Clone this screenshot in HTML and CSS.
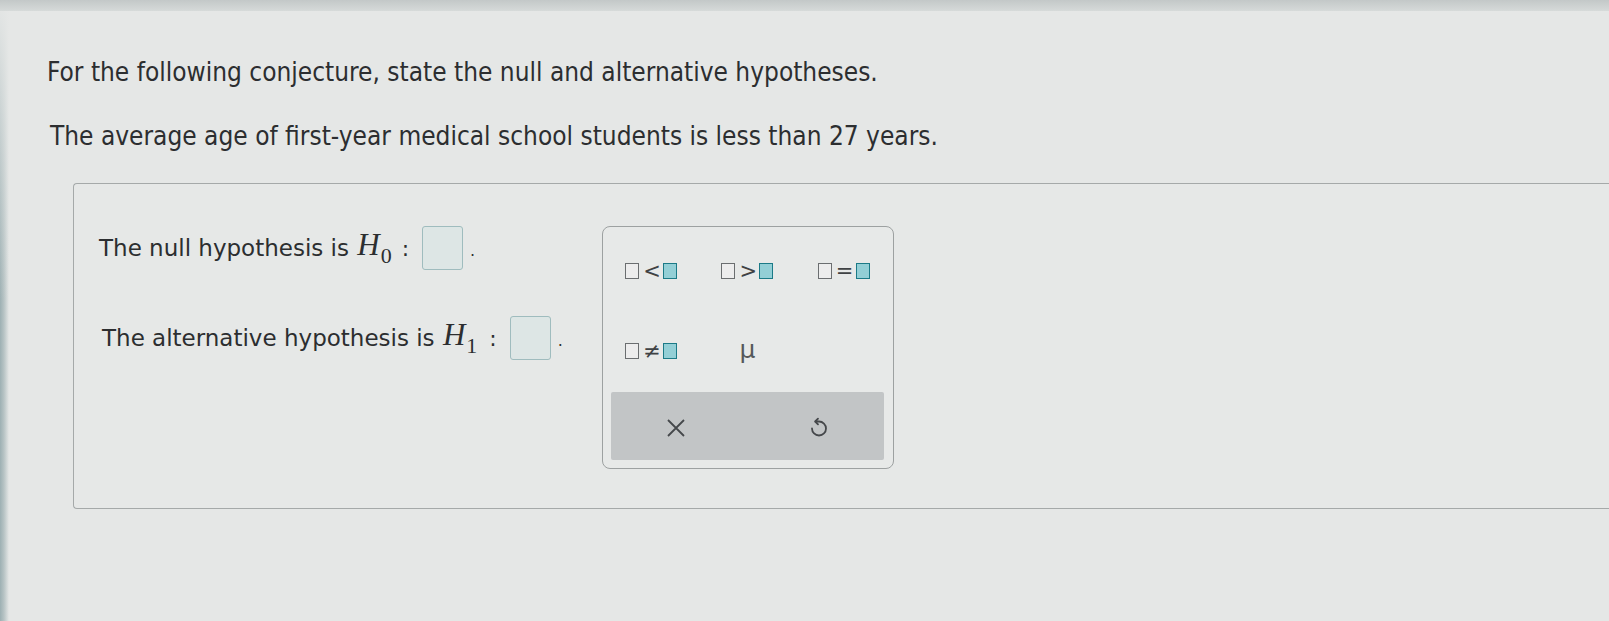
FILE: index.html
```html
<!DOCTYPE html>
<html lang="en">
<head>
<meta charset="utf-8">
<title>Hypotheses</title>
<link rel="stylesheet" href="styles.css">
</head>
<body>
<div class="topstrip"></div>
<main class="page">
  <p class="q q1">For the following conjecture, state the null and alternative hypotheses.</p>
  <p class="q q2">The average age of first-year medical school students is less than 27 years.</p>
  <section class="answer">
    <div class="prompts">
      <div class="prompt p0">The null hypothesis is <span class="math">H<sub>0</sub></span><span class="colon">:</span><span class="input"></span><span class="dot">.</span></div>
      <div class="prompt p1">The alternative hypothesis is <span class="math">H<sub>1</sub></span><span class="colon">:</span><span class="input"></span><span class="dot">.</span></div>
    </div>
    <div class="palette">
      <div class="keys">
        <button class="key"><span class="sq"></span><span class="rel">&lt;</span><span class="sq fill"></span></button>
        <button class="key"><span class="sq"></span><span class="rel">&gt;</span><span class="sq fill"></span></button>
        <button class="key"><span class="sq"></span><span class="rel">=</span><span class="sq fill"></span></button>
        <button class="key"><span class="sq"></span><span class="rel">&ne;</span><span class="sq fill"></span></button>
        <button class="key mu">&mu;</button>
      </div>
      <div class="bar">
        <button class="act act-x">
          <svg width="22" height="22" viewBox="0 0 22 22"><path d="M3 3 L19 19 M19 3 L3 19" stroke="#45484b" stroke-width="1.8" fill="none"/></svg>
        </button>
        <button class="act act-undo">
          <svg width="22" height="24" viewBox="0 0 22 24"><path d="M7.5 5.5 H11 A7 7 0 1 1 4 12.5" stroke="#45484b" stroke-width="1.8" fill="none" stroke-linecap="round"/><path d="M10 2.6 L7.2 5.5 L10 8.4" stroke="#45484b" stroke-width="1.8" fill="none" stroke-linecap="round" stroke-linejoin="round"/></svg>
        </button>
      </div>
    </div>
  </section>
</main>
</body>
</html>
```
FILE: styles.css
```css
html, body {
  margin: 0;
  padding: 0;
}
body {
  width: 1609px;
  height: 621px;
  overflow: hidden;
  background:
    linear-gradient(to bottom, rgba(229,231,230,1) 0, rgba(229,231,230,0) 300px),
    linear-gradient(to right, #9db0b3 0, #b8c4c5 4px, rgba(229,231,230,0) 9px),
    #e5e7e6;
  font-family: "DejaVu Sans", sans-serif;
  color: #2f3133;
}
.topstrip {
  height: 11px;
  background: linear-gradient(to bottom, #c3c8c8, #d6dad9);
}
.page {
  padding-left: 47px;
}
.q {
  margin: 0;
  font-family: "DejaVu Sans Condensed", "DejaVu Sans", sans-serif;
  font-stretch: condensed;
  font-size: 26px;
  line-height: 28px;
  color: #2c2e30;
}
.q1 {
  margin-top: 47px;
}
.q2 {
  margin-top: 36px;
  padding-left: 3px;
}
.answer {
  margin-top: 33px;
  margin-left: 26px;
  height: 326px;
  box-sizing: border-box;
  border: 1px solid #a5a9a9;
  border-right: none;
  border-radius: 4px 0 0 4px;
  display: flex;
  padding: 42px 0 0 25px;
  background: #e6e8e7;
}
.prompts {
  width: 503px;
  display: flex;
  flex-direction: column;
  gap: 46px;
}
.prompt {
  display: flex;
  align-items: center;
  font-size: 23px;
  height: 44px;
  color: #2c2e30;
  white-space: pre;
}
.p1 {
  padding-left: 3px;
}
.math {
  font-family: "Liberation Serif", "DejaVu Serif", serif;
  font-style: italic;
  font-size: 31px;
  margin-left: 1px;
}
.math sub {
  font-style: normal;
  font-size: 22px;
  vertical-align: -8px;
  margin-left: 1px;
}
.colon {
  margin: 0 13px 0 10px;
  font-size: 22px;
}
.p1 .colon {
  margin-left: 12px;
}
.input {
  width: 41px;
  height: 44px;
  border: 1.5px solid #9fbcbe;
  border-radius: 3px;
  background: #dde6e5;
  box-sizing: border-box;
}
.dot {
  margin-left: 7px;
  font-size: 16px;
  padding-top: 4px;
}
.palette {
  width: 292px;
  height: 243px;
  box-sizing: border-box;
  border: 1.5px solid #9da1a1;
  border-radius: 8px;
  background: #e7e9e8;
  display: flex;
  flex-direction: column;
  padding: 0 9px 8px 8px;
}
.keys {
  display: grid;
  grid-template-columns: repeat(3, 1fr);
  grid-auto-rows: 80px;
  margin: 4px -8px 0;
  height: 161px;
}
.key {
  border: none;
  background: none;
  padding: 0;
  display: flex;
  align-items: center;
  justify-content: center;
  gap: 4px;
  font-family: "DejaVu Sans", sans-serif;
  font-size: 21px;
  color: #3f4244;
  cursor: pointer;
}
.sq {
  width: 14px;
  height: 16px;
  border: 1.5px solid #6b6e70;
  background: #ededed;
  box-sizing: border-box;
}
.sq.fill {
  border-color: #1b7a87;
  background: #93cfd6;
}
.rel {
  line-height: 1;
  width: 16px;
  text-align: center;
}
.mu {
  font-size: 25px;
  color: #55585b;
  padding-bottom: 4px;
}
.bar {
  margin-top: auto;
  height: 68px;
  background: #c2c5c6;
  border-radius: 2px;
  display: flex;
}
.act {
  flex: 1;
  border: none;
  background: none;
  display: flex;
  align-items: center;
  justify-content: center;
  cursor: pointer;
  padding: 4px 0 0;
}
.act-x {
  padding-right: 6px;
}
.act-undo {
  padding-left: 6px;
}
```
